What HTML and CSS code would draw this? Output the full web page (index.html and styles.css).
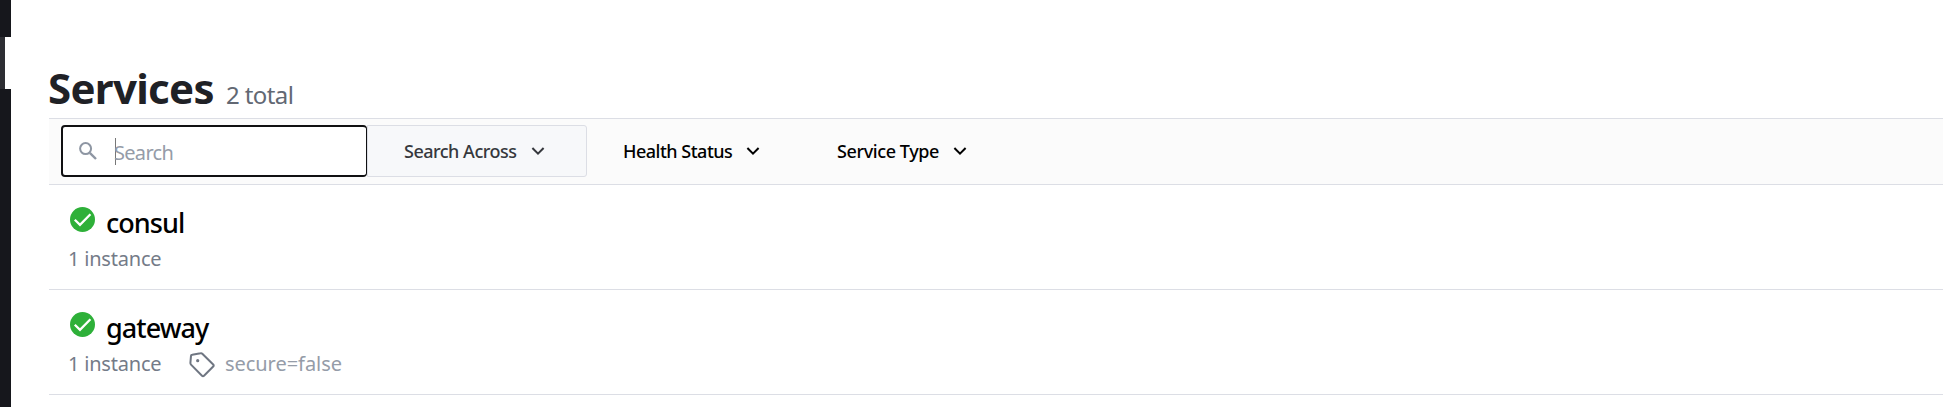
FILE: index.html
```
<!DOCTYPE html>
<html lang="en">
<head>
<meta charset="utf-8">
<title>Services</title>
<link rel="stylesheet" href="styles.css">
</head>
<body>
<div class="app">
  <nav class="rail"><div class="rail-active"></div></nav>
  <main class="content">
    <header class="page-header">
      <h1 class="title">Services</h1>
      <span class="total">2 total</span>
    </header>
    <div class="filter-bar">
      <label class="search">
        <svg class="search-icon" viewBox="0 0 18 18"><circle cx="6.6" cy="6.6" r="5.5" fill="none" stroke="currentColor" stroke-width="2"/><path d="M10.8 10.8l6.200 6.200" fill="none" stroke="currentColor" stroke-width="2.4"/></svg>
        <span class="caret"></span>
        <span class="placeholder">Search</span>
      </label>
      <button class="menu menu-across"><span class="menu-label label-across">Search Across</span><svg class="chevron" viewBox="0 0 12 8"><path d="M.4 1l5.600 5.600L11.600 1"/></svg></button>
      <button class="menu menu-health"><span class="menu-label label-health">Health Status</span><svg class="chevron" viewBox="0 0 12 8"><path d="M.4 1l5.600 5.600L11.600 1"/></svg></button>
      <button class="menu menu-type"><span class="menu-label label-type">Service Type</span><svg class="chevron" viewBox="0 0 12 8"><path d="M.4 1l5.600 5.600L11.600 1"/></svg></button>
    </div>
    <ul class="services">
      <li class="service">
        <div class="service-head">
          <svg class="check" viewBox="0 0 24 24"><circle cx="12" cy="12" r="12" fill="#2eb039"/><path d="M4.6 12.2l5 5L19.6 7" fill="none" stroke="#fff" stroke-width="2.2"/></svg>
          <span class="name">consul</span>
        </div>
        <div class="service-meta"><span class="instances">1 instance</span></div>
      </li>
      <li class="service">
        <div class="service-head">
          <svg class="check" viewBox="0 0 24 24"><circle cx="12" cy="12" r="12" fill="#2eb039"/><path d="M4.6 12.2l5 5L19.6 7" fill="none" stroke="#fff" stroke-width="2.2"/></svg>
          <span class="name">gateway</span>
        </div>
        <div class="service-meta">
          <span class="instances">1 instance</span>
          <svg class="tag-icon" viewBox="0 0 26 26"><path d="M3.2 2.7L11.6 1.3q1-.2 1.700.5L24.200 12.500q1 1 0 2L15 23.700q-1 1-2 0L2 12.600q-.7-.7-.6-1.700L2 3.800q.1-1 1.200-1.100z" fill="none" stroke="#6f7682" stroke-width="2" stroke-linejoin="round"/><circle cx="8.700" cy="8.700" r="1.600" fill="#6f7682"/></svg>
          <span class="tag">secure=false</span>
        </div>
      </li>
    </ul>
  </main>
</div>
</body>
</html>
```
FILE: styles.css
```
* { box-sizing: border-box; }
body {
  margin: 0;
  background: #fff;
  font-family: "Noto Sans", "Open Sans", sans-serif;
  overflow: hidden;
}
.app { display: flex; height: 407px; }
.rail {
  flex: none;
  width: 11px;
  padding-top: 37px;
  background: #16171c;
}
.rail-active {
  height: 52px;
  background: #2d2e33;
  border-right: 6px solid #fff;
}
.content { flex: 1; min-width: 0; padding-left: 38px; }
.page-header {
  display: flex;
  align-items: baseline;
  height: 118px;
  padding-top: 58px;
}
.title {
  width: 178px;
  margin: 0 0 0 -1px;
  font-size: 42px;
  line-height: 60px;
  font-weight: 700;
  letter-spacing: -0.7px;
  color: #1f2126;
  white-space: nowrap;
}
.total { font-size: 24px; line-height: 36px; letter-spacing: -0.6px; color: #626873; }
.filter-bar {
  display: flex;
  height: 67px;
  padding: 6px 0 0 12px;
  background: #fbfbfb;
  border-top: 1px solid #dcdee5;
  border-bottom: 1px solid #dcdee5;
}
.search {
  display: flex;
  width: 306px;
  height: 52px;
  background: #fff;
  border: 2px solid #101012;
  border-right-width: 1px;
  border-radius: 4px;
}
.search-icon { width: 18px; height: 18px; margin: 15px 0 0 16px; color: #8e96a3; }
.caret { width: 1px; height: 27px; margin: 11px 0 0 18px; background: #777; }
.placeholder { font-size: 20px; line-height: 28px; margin: 12px 0 0 -2px; letter-spacing: -0.7px; color: #959ca8; }
.menu {
  display: flex;
  align-items: center;
  height: 52px;
  padding: 0;
  border: 0;
  background: none;
  font: inherit;
  font-size: 18px;
  font-weight: 500;
  color: #000;
  white-space: nowrap;
}
.menu-label { text-align: left; line-height: 26px; letter-spacing: -0.5px; }
.menu-across {
  width: 220px;
  padding-left: 36px;
  background: #f7f8fa;
  border: 1px solid #dcdee5;
  border-radius: 0 3px 3px 0;
  color: #36383d;
}
.menu-health { margin-left: 36px; }
.menu-type { margin-left: 78px; }
.label-across { width: 128px; }
.label-health { width: 124px; }
.label-type { width: 117px; letter-spacing: -0.4px; }
.chevron { width: 12px; height: 8px; overflow: visible; fill: none; stroke: currentColor; stroke-width: 2; }
.services { margin: 0; padding: 0; list-style: none; }
.service { height: 105px; padding: 22px 0 0 20px; border-bottom: 1px solid #dcdee5; }
.service-head { display: flex; height: 38px; }
.check { width: 25px; height: 25px; margin: 0 11px 0 1px; }
.name { font-size: 27px; line-height: 36px; margin-top: -2px; font-weight: 500; letter-spacing: -0.95px; color: #000; }
.service-meta { display: flex; font-size: 20px; line-height: 28px; white-space: nowrap; }
.instances { width: 121px; margin-left: -1px; letter-spacing: -0.2px; color: #747b88; }
.tag-icon { width: 26px; height: 26px; margin-top: 2px; }
.tag { margin-left: 10px; letter-spacing: -0.05px; color: #959ca8; }
```
